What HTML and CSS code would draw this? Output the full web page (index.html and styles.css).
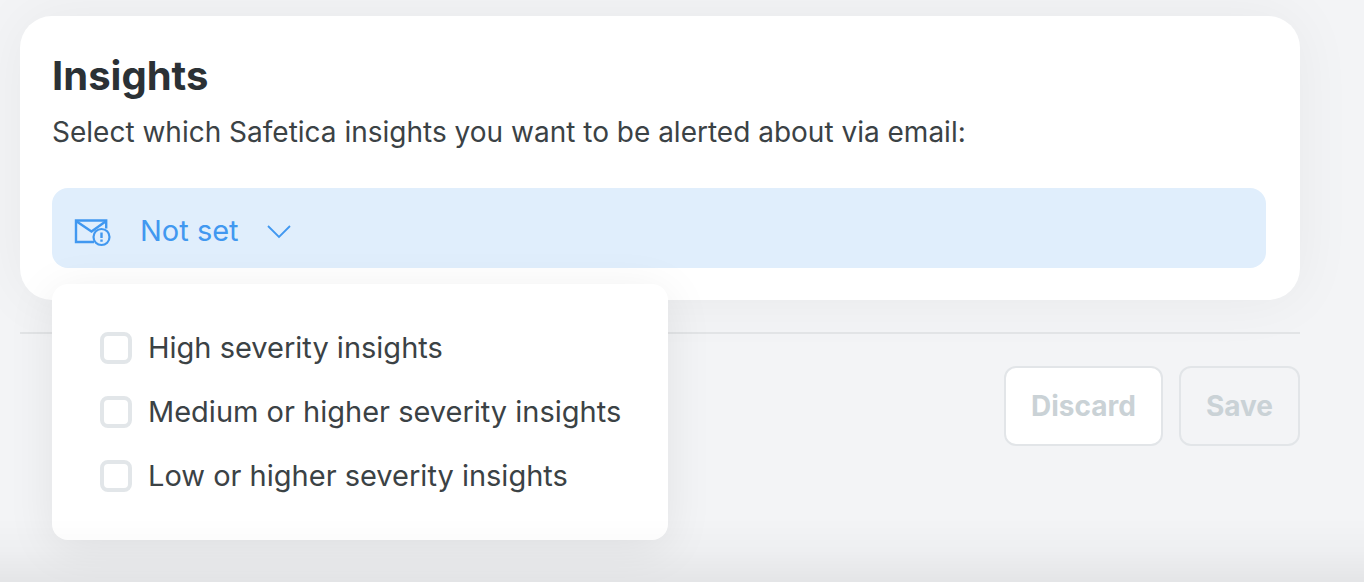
FILE: index.html
```
<!DOCTYPE html>
<html lang="en">
<head>
    <meta charset="UTF-8">
    <meta name="viewport" content="width=device-width, initial-scale=1.0">
    <title>Insights</title>
    <link rel="stylesheet" href="styles.css">
</head>
<body>
    <main>
        <section class="card">
            <h1>Insights</h1>
            <p>Select which Safetica insights you want to be alerted about via email:</p>
            <div class="dropdown">
                <button type="button" class="dropdown-toggle" aria-expanded="true" aria-controls="severityMenu">
                    <svg class="mail-icon" width="40" height="32" viewBox="0 0 40 32" fill="none" stroke="currentColor" stroke-width="2.4" aria-hidden="true">
                        <path d="M34.2 13.5V5.5H4V27h18"/>
                        <path d="M4 6l15.5 10.5L34.2 6"/>
                        <circle cx="29.5" cy="22" r="8" stroke-width="2.2"/>
                        <path d="M29.5 17.5V23M29.5 24.5v2.2"/>
                    </svg>
                    <span>Not set</span>
                    <svg class="chevron" width="24" height="24" viewBox="0 0 24 24" fill="none" stroke="currentColor" stroke-width="1.8" aria-hidden="true">
                        <path d="M1 7l11 11L23 7"/>
                    </svg>
                </button>
                <div class="dropdown-menu" id="severityMenu">
                    <label><input type="checkbox" name="severity" value="high">High severity insights</label>
                    <label><input type="checkbox" name="severity" value="medium">Medium or higher severity insights</label>
                    <label><input type="checkbox" name="severity" value="low">Low or higher severity insights</label>
                </div>
            </div>
        </section>
        <div class="actions">
            <button type="button" class="btn btn-discard" disabled>Discard</button>
            <button type="button" class="btn" disabled>Save</button>
        </div>
    </main>
</body>
</html>
```

FILE: styles.css
```
* {
    box-sizing: border-box;
}
body {
    font-family: Inter, "Liberation Sans", sans-serif;
    font-size: 28px;
    line-height: 40px;
    margin: 0;
    background-color: #f3f4f6;
    color: #3b4245;
    min-height: 100vh;
}
body::after {
    content: "";
    position: fixed;
    left: 0;
    right: 0;
    bottom: 0;
    height: 64px;
    background: linear-gradient(rgba(0,0,0,0), rgba(0,0,0,0.02) 50%, rgba(0,0,0,0.06));
    pointer-events: none;
    z-index: 2;
}
main {
    padding: 16px 64px 0 20px;
}
.card {
    background: #fff;
    border-radius: 32px;
    padding: 32px 34px 32px 32px;
    box-shadow: 0 0 60px rgba(0,0,0,0.05);
}
h1 {
    margin: 0;
    font-size: 40px;
    line-height: 56px;
    font-weight: 700;
    color: #2b3135;
}
p {
    margin: 8px 0 36px;
}
.dropdown {
    position: relative;
    font-size: 29px;
}
.dropdown-toggle {
    display: flex;
    align-items: center;
    width: 100%;
    height: 80px;
    padding: 6px 20px 0;
    border: none;
    border-radius: 16px;
    background: #e0eefc;
    color: #4198f0;
    font: inherit;
    cursor: pointer;
}
.mail-icon {
    margin-right: 28px;
}
.chevron {
    margin-left: 28px;
}
.dropdown-menu {
    position: absolute;
    top: 96px;
    left: 0;
    z-index: 1;
    display: flex;
    flex-direction: column;
    gap: 24px;
    width: 616px;
    padding: 44px 48px;
    background: #fff;
    border-radius: 16px;
    box-shadow: 0 8px 48px rgba(0,0,0,0.08);
}
.dropdown-menu label {
    display: flex;
    align-items: center;
    gap: 16px;
    white-space: nowrap;
    cursor: pointer;
}
.dropdown-menu input {
    appearance: none;
    flex-shrink: 0;
    width: 32px;
    height: 32px;
    margin: 0;
    border: 4px solid #e2e6e9;
    border-radius: 8px;
    background: #fff;
}
.dropdown-menu input:checked {
    background: #4198f0;
}
.actions {
    display: flex;
    justify-content: flex-end;
    gap: 16px;
    margin-top: 32px;
    padding-top: 32px;
    border-top: 2px solid #e2e4e6;
}
.btn {
    height: 80px;
    padding: 0 25px;
    border: 2px solid #e2e5e8;
    border-radius: 12px;
    background: transparent;
    color: #cad2d6;
    font: inherit;
    font-weight: 700;
}
.btn-discard {
    background: #fff;
}
```
